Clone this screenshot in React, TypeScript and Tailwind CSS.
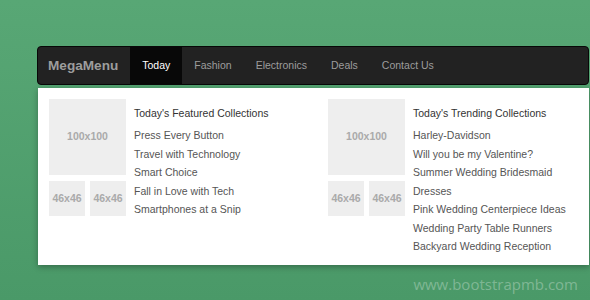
import React from "react";

type Column = {
  readonly title: string;
  readonly items: readonly string[];
};

const navItems = ["Today", "Fashion", "Electronics", "Deals", "Contact Us"];

const columns: Column[] = [
  {
    title: "Today's Featured Collections",
    items: [
      "Press Every Button",
      "Travel with Technology",
      "Smart Choice",
      "Fall in Love with Tech",
      "Smartphones at a Snip",
    ],
  },
  {
    title: "Today's Trending Collections",
    items: [
      "Harley-Davidson",
      "Will you be my Valentine?",
      "Summer Wedding Bridesmaid",
      "Dresses",
      "Pink Wedding Centerpiece Ideas",
      "Wedding Party Table Runners",
      "Backyard Wedding Reception",
    ],
  },
];

const Placeholder = ({ label, size }: { label: string; size: string }) => (
  <div className={`${size} bg-[#eeeeee] flex items-center justify-center text-[10.5px] font-bold text-[#aaaaaa]`}>
    {label}
  </div>
);

const MenuColumn = ({ column }: { column: Column }) => (
  <div className="flex gap-2">
    {/* Thumbnails */}
    <div className="flex flex-col gap-[6px] w-[77px] shrink-0">
      <Placeholder label="100x100" size="w-[77px] h-[76px]" />
      <div className="flex justify-between">
        <Placeholder label="46x46" size="w-[36px] h-[35px]" />
        <Placeholder label="46x46" size="w-[36px] h-[35px]" />
      </div>
    </div>

    {/* Links */}
    <div className="flex flex-col pt-[5px]">
      <h4 className="text-[10.5px] leading-[18px] text-[#333333] mb-[4px]">{column.title}</h4>
      <ul className="flex flex-col">
        {column.items.map((item) => (
          <li key={item} className="text-[10.5px] leading-[18.5px] text-[#555555]">
            {item}
          </li>
        ))}
      </ul>
    </div>
  </div>
);

export default function App() {
  return (
    <div
      className="w-[590px] h-[300px] overflow-hidden bg-gradient-to-b from-[#58a775] to-[#4a9968] pt-[46px] pl-[37px] flex flex-col"
      style={{ fontFamily: '"Liberation Sans", Arial, sans-serif' }}
    >
      <div className="w-[552px] flex flex-col">
        {/* Navbar */}
        <nav className="h-[39px] bg-[#222222] border border-[#080808] rounded-[4px] flex items-stretch">
          <span className="pl-[10px] pr-[12px] pt-px flex items-center text-[13.6px] font-bold text-[#9d9d9d]">
            MegaMenu
          </span>
          {navItems.map((item, index) => (
            <span
              key={item}
              className={`px-3 pt-px flex items-center text-[10.5px] ${
                index === 0 ? "bg-[#080808] text-white" : "text-[#9d9d9d]"
              }`}
            >
              {item}
            </span>
          ))}
        </nav>

        {/* Dropdown panel */}
        <div className="mt-[3px] ml-px bg-white shadow-[0_2px_6px_rgba(0,0,0,0.3)] h-[177px] px-[11px] pt-[11px] grid grid-cols-[251px_251px] gap-x-[28px]">
          {columns.map((column) => (
            <MenuColumn key={column.title} column={column} />
          ))}
        </div>
      </div>

      <div className="mt-auto mb-[5px] pr-[12px] self-end text-[15px] text-white/30" style={{ fontFamily: '"Open Sans", sans-serif' }}>
        www.bootstrapmb.com
      </div>
    </div>
  );
}
